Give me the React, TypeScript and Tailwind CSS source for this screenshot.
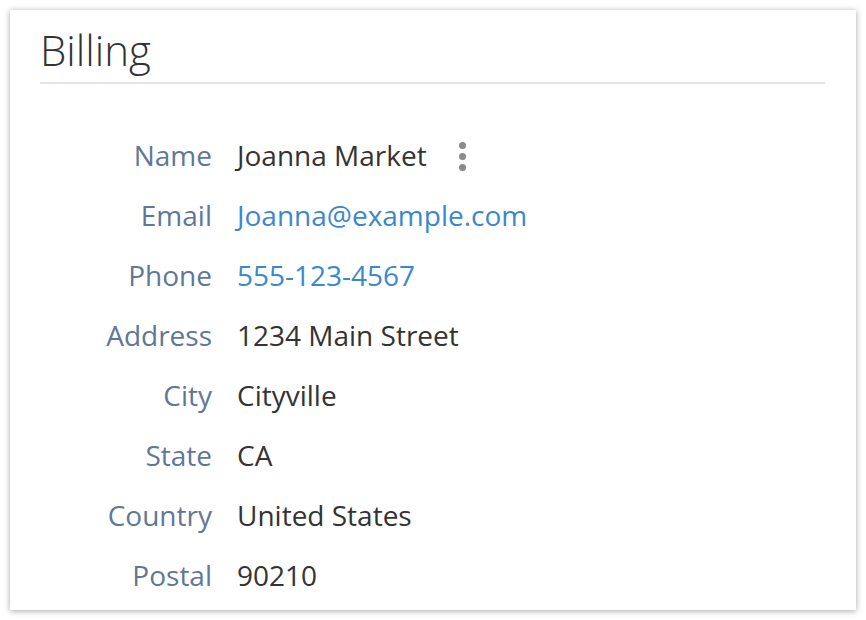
import React from "react";

const rows: { label: string; value: string; link?: boolean; menu?: boolean }[] = [
  { label: "Name", value: "Joanna Market", menu: true },
  { label: "Email", value: "Joanna@example.com", link: true },
  { label: "Phone", value: "555-123-4567", link: true },
  { label: "Address", value: "1234 Main Street" },
  { label: "City", value: "Cityville" },
  { label: "State", value: "CA" },
  { label: "Country", value: "United States" },
  { label: "Postal", value: "90210" },
];

export default function App() {
  return (
    <div className="w-[866px] h-[620px] bg-white p-[10px]" style={{ fontFamily: '"Open Sans", sans-serif' }}>
      <div className="w-[846px] h-[600px] bg-white shadow-[0_1px_6px_rgba(0,0,0,0.35)] px-[30px] pt-[11px]">
        <h1 className="text-[42px] font-light leading-[58px] text-[#333] pb-[3px] border-b-2 border-[#e3e3e3] w-[785px]">
          Billing
        </h1>
        <div className="mt-[41px] flex flex-col">
          {rows.map((r) => (
            <div key={r.label} className="flex items-center h-[60px] text-[28px]">
              <div className="w-[172px] text-right text-[#5f7896]">{r.label}</div>
              <div className={"ml-[25px] " + (r.link ? "text-[#3b88cc]" : "text-[#333]")}>{r.value}</div>
              {r.menu && (
                <div className="ml-[32px] flex flex-col gap-[4px] pt-[2px]">
                  <span className="block w-[7px] h-[7px] rounded-full bg-[#8a8a8a]" />
                  <span className="block w-[7px] h-[7px] rounded-full bg-[#8a8a8a]" />
                  <span className="block w-[7px] h-[7px] rounded-full bg-[#8a8a8a]" />
                </div>
              )}
            </div>
          ))}
        </div>
      </div>
    </div>
  );
}
